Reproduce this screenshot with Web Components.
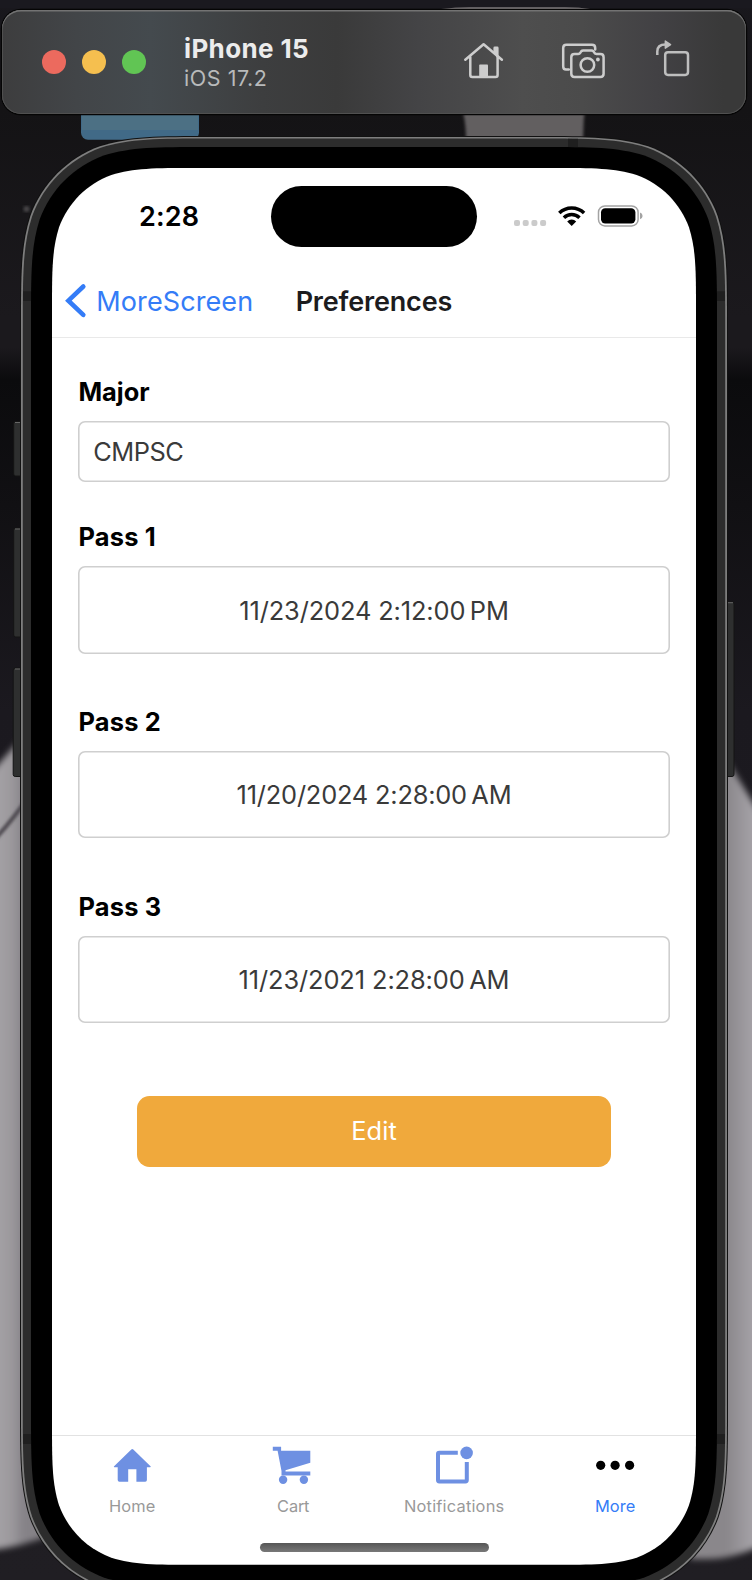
<!DOCTYPE html>
<html lang="en">
<head>
<meta charset="utf-8">
<title>iPhone 15 – Preferences</title>
<style>
  html, body { margin: 0; background: #17161a; }
  body { height: 1580px; overflow: hidden; font-family: Inter, "Liberation Sans", sans-serif; }
</style>
</head>
<body>
<sim-desktop>
  <sim-toolbar device="iPhone 15" os="iOS 17.2"></sim-toolbar>
  <phone-frame>
    <status-bar time="2:28"></status-bar>
    <nav-bar back="MoreScreen" heading="Preferences"></nav-bar>
    <preferences-form>
      <form-field label="Major" style="--gap-after:40.3px;--box:61px">CMPSC</form-field>
      <form-field label="Pass 1" centered style="--track:-.12px;--nudge:2px">11/23/2024 2:12:00&#8239;PM</form-field>
      <form-field label="Pass 2" centered style="--track:-.2px">11/20/2024 2:28:00&#8239;AM</form-field>
      <form-field label="Pass 3" centered style="--track:-.1px">11/23/2021 2:28:00&#8239;AM</form-field>
      <action-button>Edit</action-button>
    </preferences-form>
    <tab-bar>
      <tab-item icon="home">Home</tab-item>
      <tab-item icon="cart" style="--track:-.2px">Cart</tab-item>
      <tab-item icon="note" style="--track:.2px">Notifications</tab-item>
      <tab-item icon="more" active>More</tab-item>
    </tab-bar>
  </phone-frame>
</sim-desktop>

<script>
const define = (name, render) => customElements.define(name, class extends HTMLElement {
  constructor() { super(); this.attachShadow({ mode: 'open' }); }
  connectedCallback() { this.shadowRoot.innerHTML = render(this); }
});

/* Rectangle path with continuous-curvature corners of nominal radius r. */
function squircle(x, y, w, h, r) {
  const a = 1.52866 * r, b = 1.08849 * r, c = .86841 * r, d = .63149 * r, e = .07491 * r, f = .37282 * r, g = .16906 * r;
  const R = x + w, B = y + h;
  return `M${x + a} ${y}H${R - a}
    C${R - b} ${y} ${R - c} ${y} ${R - d} ${y + e}C${R - f} ${y + g} ${R - g} ${y + f} ${R - e} ${y + d}C${R} ${y + c} ${R} ${y + b} ${R} ${y + a}
    V${B - a}C${R} ${B - b} ${R} ${B - c} ${R - e} ${B - d}C${R - g} ${B - f} ${R - f} ${B - g} ${R - d} ${B - e}C${R - c} ${B} ${R - b} ${B} ${R - a} ${B}
    H${x + a}C${x + b} ${B} ${x + c} ${B} ${x + d} ${B - e}C${x + f} ${B - g} ${x + g} ${B - f} ${x + e} ${B - d}C${x} ${B - c} ${x} ${B - b} ${x} ${B - a}
    V${y + a}C${x} ${y + b} ${x} ${y + c} ${x + e} ${y + d}C${x + g} ${y + f} ${x + f} ${y + g} ${x + d} ${y + e}C${x + c} ${y} ${x + b} ${y} ${x + a} ${y}Z`;
}

define('sim-desktop', () => `
<style>
  :host { display: flex; flex-direction: column; position: relative; width: 752px; height: 1580px; overflow: hidden; box-sizing: border-box; padding: 10px 6px 0 2px; }
  .wall { position: absolute; left: 0; top: 0; }
</style>
<svg class="wall" width="752" height="1580" viewBox="0 0 752 1580">
  <defs>
    <linearGradient id="l" gradientUnits="userSpaceOnUse" x1="0" x2="24" y1="0" y2="0"><stop offset="0" stop-color="#a3a0a4"/><stop offset=".5" stop-color="#9b989c"/><stop offset="1" stop-color="#858287"/></linearGradient>
    <linearGradient id="r" gradientUnits="userSpaceOnUse" x1="727" x2="752" y1="0" y2="0"><stop offset="0" stop-color="#8a878b"/><stop offset="1" stop-color="#a4a1a6"/></linearGradient>
    <linearGradient id="base" x1="0" y1="0" x2="0" y2="1"><stop offset="0" stop-color="#19181d"/><stop offset=".07" stop-color="#141315"/><stop offset=".2" stop-color="#1b191d"/><stop offset=".22" stop-color="#1b191d"/><stop offset=".24" stop-color="#0b0b0d"/><stop offset=".32" stop-color="#111013"/><stop offset=".45" stop-color="#1b191f"/><stop offset="1" stop-color="#201e23"/></linearGradient>
    <filter id="b1" x="-10%" y="-10%" width="120%" height="120%"><feGaussianBlur stdDeviation="1.6"/></filter>
    <filter id="b3" x="-60%" y="-10%" width="220%" height="120%"><feGaussianBlur stdDeviation="3"/></filter>
  </defs>
  <rect width="752" height="1580" fill="url(#base)"/>
  <rect width="752" height="8.5" fill="#1a191f"/>
  <path d="M441 8.8Q455 7.6 470 7.6H565Q580 7.6 590 8.8Z" fill="#aaa5a5"/>
  <rect x="81" y="100" width="118" height="39.8" rx="7" fill="#416a87"/>
  <rect x="82" y="100" width="116" height="30" fill="#4c7084"/>
  <path d="M463 100H586Q583 120 583 140H466Q466 125 463 112Z" fill="#625f61" filter="url(#b1)"/>
  <path d="M-30 795L-10 774L50 705V1535Q12 1551 -30 1551Z" fill="url(#l)" filter="url(#b3)"/>
  <path d="M30 795Q14 818 -4 838" fill="none" stroke="#4d4a50" stroke-width="4" filter="url(#b1)"/>
  <path d="M700 730L718 745L738 778L782 850V1535Q738 1560 705 1559L690 1559Z" fill="url(#r)" filter="url(#b3)"/>
  <circle cx="26.5" cy="209" r="3" fill="#48464a" filter="url(#b1)"/>
</svg>
<slot></slot>`);

define('sim-toolbar', el => `
<style>
  :host { display: flex; align-items: center; position: relative; height: 104px; flex: none; box-sizing: border-box; border-radius: 19px;
    padding: 0 55px 0 40px;
    background: linear-gradient(90deg, #3d3d3e 0, #424548 10%, #444a4e 20%, #3d3e3f 35%, #3a3a3a 45%, #444446 56%, #4e4e4e 70%, #4b4b4b 78%, #424144 88%, #393939 97%);
    box-shadow: inset 0 1.5px 0 #737373, inset 0 0 0 1px #505050, 0 0 0 1.2px #050505; }
  .lights { display: flex; gap: 16px; }
  i { width: 24px; height: 24px; border-radius: 50%; }
  .names { margin-left: 38px; display: flex; flex-direction: column; padding-top: 1px; }
  b { font: 700 26px/30px Inter, sans-serif; letter-spacing: .36px; color: #ececec; }
  span { font: 400 21.5px/28px Inter, sans-serif; letter-spacing: .55px; color: #b8babb; }
  .icons { margin-left: auto; display: flex; align-items: center; }
  svg { display: block; fill: none; stroke: #cdcdcd; stroke-width: 2.5; stroke-linecap: round; stroke-linejoin: round; }
</style>
<div class="lights"><i style="background:#ec6a5e"></i><i style="background:#f5bf4f"></i><i style="background:#61c554"></i></div>
<div class="names"><b>${el.getAttribute('device')}</b><span>${el.getAttribute('os')}</span></div>
<div class="icons">
  <svg width="228" height="44" viewBox="463 40 228 44">
    <path d="M465.3 59.8L483.6 44.3L501.9 59.8M470.3 57V75Q470.3 77 472.3 77H495.6Q497.6 77 497.6 75V57"/>
    <path d="M494.8 53V48H497.2V56" stroke-width="2.8"/>
    <rect x="479.2" y="64.6" width="8.8" height="12" rx=".8" fill="#cdcdcd" stroke="none"/>
    <path d="M568.8 69.6H566Q563.2 69.6 563.2 66.6V48Q563.2 44.8 566.4 44.8H592Q595.2 44.8 595.2 48V49.6"/>
    <path d="M571.3 57.2Q571.3 54 574.5 54H578.2Q579.6 54 580.4 52.6L581.2 51.4Q582 50.4 583.2 50.4H591.5Q592.7 50.4 593.5 51.4L594.3 52.6Q595.1 54 596.5 54H600.4Q603.6 54 603.6 57.2V73.8Q603.6 77 600.4 77H574.5Q571.3 77 571.3 73.8Z"/>
    <circle cx="587.4" cy="65" r="6.8"/>
    <circle cx="597.9" cy="59.5" r="1.9" fill="#cdcdcd" stroke="none"/>
    <g stroke="#bebebe"><rect x="665.2" y="52.3" width="22.8" height="22.6" rx="2.8"/>
    <path stroke-linecap="butt" d="M657.3 55V51.4Q657.3 44.4 665.5 44.4"/></g>
    <path d="M665.3 41L670.6 44.6L665.3 48.2Z" fill="#bebebe" stroke="#bebebe" stroke-width="1.4"/>
  </svg>
</div>`);

define('phone-frame', () => `
<style>
  :host { display: flow-root; position: relative; margin: 23px 0 0 19px; width: 706px; height: 1460px; flex: none; }
  svg { position: absolute; left: -21px; top: -137px; overflow: visible; }
  .screen { position: relative; margin: 31px 31px 0; display: flex; flex-direction: column; width: 644px; height: 1396.7px; }
</style>
<svg width="752" height="1640" viewBox="0 0 752 1640">
  <g fill="#2e2f2f" stroke="#141414" stroke-width="1">
    <rect x="13.7" y="421.5" width="12" height="54.5" rx="2"/>
    <rect x="13.7" y="528" width="12" height="109" rx="2"/>
    <rect x="13.2" y="668" width="12" height="108.5" rx="2"/>
    <rect x="722" y="602" width="12" height="174.5" rx="2"/>
  </g>
  <path d="M15 422.5H22M15 529H22M15 669H22M727 602.7H733" stroke="#666" stroke-width="1"/>
  <path d="${squircle(20, 136, 708, 1461, 126)}" fill="#111"/>
  <path d="${squircle(21, 137, 706, 1459, 125)}" fill="#7e7e7e"/>
  <path d="${squircle(22.8, 138.6, 702.4, 1455.8, 123.4)}" fill="#2c2c2c"/>
  <path d="M568 138.8H578V147H568ZM23 291.3H31V301H23ZM717 291.3H725V301H717ZM23 1434H31V1444H23ZM717 1434H725V1444H717Z" fill="#1f1f1f"/>
  <path d="${squircle(31, 147, 686, 1439, 115)}" fill="#000"/>
  <path d="${squircle(52, 168, 644, 1396.7, 94)}" fill="#fff"/>
</svg>
<div class="screen"><slot></slot></div>`);

define('status-bar', el => `
<style>
  :host { display: grid; grid-template-columns: 219.4px 205.2px 1fr; align-items: center; height: 97px; flex: none; }
  time { justify-self: start; margin-left: 87px; font: 600 27px/32px Inter, sans-serif; letter-spacing: .15px; color: #000; }
  .island { height: 60.5px; border-radius: 31px; background: #000; }
  svg { display: block; margin-left: 36.4px; }
</style>
<time>${el.getAttribute('time')}</time>
<div class="island"></div>
<svg width="132" height="26" viewBox="513 204.1 132 26">
  <g fill="#cbcbcb"><rect x="514" y="220.2" width="6" height="6" rx="2"/><rect x="522.7" y="220.2" width="6" height="6" rx="2"/><rect x="531.4" y="220.2" width="6" height="6" rx="2"/><rect x="540.1" y="220.2" width="6" height="6" rx="2"/></g>
  <g fill="none" stroke="#000" stroke-width="3.5">
    <path d="M559.3 213.2A17.8 17.8 0 0 1 584.1 213.2"/>
    <path d="M563.9 217.8A11.3 11.3 0 0 1 579.5 217.8"/>
  </g>
  <path d="M571.7 226L567.2 221.5A6.5 6.5 0 0 1 576.2 221.5Z"/>
  <rect x="598.5" y="206" width="39.6" height="20" rx="6.4" fill="none" stroke="#a3a3a3" stroke-width="1.5"/>
  <rect x="601" y="208.3" width="34.4" height="15.2" rx="4.2"/>
  <path d="M640 212.7Q642.6 213.6 642.6 216T640 219.3Z" fill="#a3a3a3"/>
</svg>`);

define('nav-bar', el => `
<style>
  :host { display: flex; align-items: center; height: 73px; flex: none; box-sizing: border-box; border-bottom: 1px solid #e9e9e9; padding-left: 13px; }
  svg { display: block; }
  .back { margin: 2px 0 0 9.3px; font: 400 27px/32px Inter, sans-serif; letter-spacing: .1px; color: #347cf7; }
  h1 { margin: 1px 0 0 42.4px; font: 600 27px/32px Inter, sans-serif; letter-spacing: -.18px; color: #1c1c1e; }
</style>
<svg width="22" height="36" viewBox="65 283 22 36"><path d="M83.3 286.5L68.4 300.7L83.3 314.9" fill="none" stroke="#347cf7" stroke-width="4.6" stroke-linecap="round"/></svg>
<span class="back">${el.getAttribute('back')}</span>
<h1>${el.getAttribute('heading')}</h1>`);

define('preferences-form', () => `
<style>:host { display: flex; flex-direction: column; flex: 1; padding: 39px 26.2px 0; }</style><slot></slot>`);

define('form-field', el => `
<style>
  :host { display: flex; flex-direction: column; flex: none; margin-bottom: var(--gap-after, 53.3px); }
  label { margin: 0 0 14px .2px; font: 700 25.4px/30px Inter, sans-serif; letter-spacing: .22px; color: #000; }
  .box { display: flex; align-items: center; height: var(--box, 87.4px); box-sizing: border-box; box-shadow: inset 0 0 0 1.6px #cfcfcf; border-radius: 7px; padding: var(--nudge, 1px) 15px 0;
    font: 400 25.4px/30px Inter, sans-serif; letter-spacing: var(--track, -.5px); color: #3a3a3a; }
  :host([centered]) .box { justify-content: center; }
</style>
<label style="${el.getAttribute('label') === 'Major' ? 'letter-spacing:0' : ''}">${el.getAttribute('label')}</label>
<div class="box"><span><slot></slot></span></div>`);

define('action-button', () => `
<style>
  :host { display: block; margin: 19.2px 58.8px 0; }
  button { display: block; width: 100%; height: 71px; border: 0; border-radius: 12.5px; background: #f0a93c; color: #fff; font: 400 25.4px/30px Inter, sans-serif; letter-spacing: .1px; padding: 0; }
</style>
<button><slot></slot></button>`);

define('tab-bar', () => `
<style>
  :host { display: flex; flex-direction: column; height: 130px; flex: none; box-sizing: border-box; border-top: 1px solid #e2e2e2; }
  .tabs { display: grid; grid-template-columns: repeat(4, 1fr); }
  .indicator { margin: 26.4px 0 0 207.6px; width: 229px; height: 8.6px; border-radius: 5px; background: linear-gradient(#565656, #787878); }
</style>
<div class="tabs"><slot></slot></div>
<div class="indicator"></div>`);

const tabIcons = {
  home: '<path d="M20.3 5.6Q21.3 4.6 22.3 5.6L39.5 22.2Q40.4 23.3 39 23.3H35.9V36Q35.9 37.8 34.2 37.8H25.4V25.2H17.2V37.8H8.4Q6.7 37.8 6.7 36V23.3H3.6Q2.2 23.3 3.1 22.2Z" fill="#6e90e2"/>',
  cart: '<path d="M1.8 2.8H10.1V6.7H39.3V18.7L14.5 26.3V27.4H39.3V31.5H10.5V26.9L6.6 6.7H1.8Z" fill="#6e90e2"/><circle cx="12.1" cy="35.7" r="4.2" fill="#6e90e2"/><circle cx="32.9" cy="35.7" r="4.2" fill="#6e90e2"/>',
  note: '<path d="M26.8 8.7H8.3Q7 8.7 7 10V36Q7 37.4 8.3 37.4H34.5Q35.8 37.4 35.8 36V18" fill="none" stroke="#6e90e2" stroke-width="4"/><circle cx="35.6" cy="8.9" r="6.3" fill="#6e90e2"/>',
  more: '<circle cx="6.7" cy="21.3" r="4.6"/><circle cx="21.1" cy="21.3" r="4.6"/><circle cx="35.6" cy="21.3" r="4.6"/>'
};
const iconShift = { home: -1, cart: -3, note: -5, more: -1 };
define('tab-item', el => `
<style>
  :host { display: flex; flex-direction: column; align-items: center; padding-top: 8.3px; color: #999; }
  :host([active]) { color: #347cf7; }
  svg { display: block; width: 42px; height: 42px; margin-left: ${iconShift[el.getAttribute('icon')]}px; }
  span { margin: 9px 0 0 -.6px; font: 400 16.4px/22px Inter, sans-serif; letter-spacing: var(--track, .1px); }
</style>
<svg viewBox="0 0 42 42">${tabIcons[el.getAttribute('icon')]}</svg>
<span><slot></slot></span>`);
</script>
</body>
</html>
